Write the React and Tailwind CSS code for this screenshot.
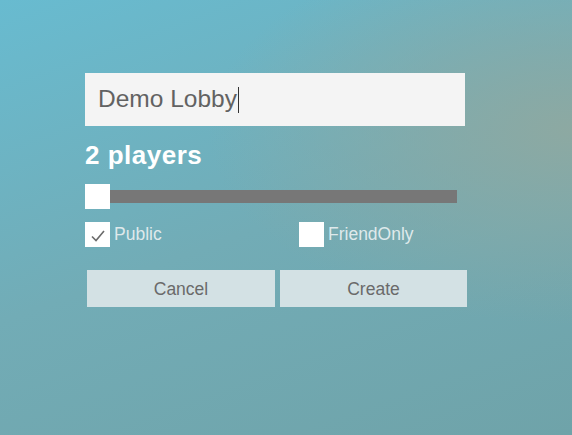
import React from 'react';

const font = { fontFamily: '"Liberation Sans", Arial, sans-serif' };

const Checkbox = ({ label, checked }) => (
  <div className="flex items-center gap-[4px]">
    <div className="w-[25px] h-[25px] bg-white flex items-center justify-center">
      {checked && (
        <svg width="16" height="14" viewBox="0 0 16 14" className="mt-[3px]">
          <path d="M2 7.5 L6 11.5 L14 2" fill="none" stroke="#6a6a6a" strokeWidth="1.6" />
        </svg>
      )}
    </div>
    <span className="text-[17.5px] text-[#dfe9eb]">{label}</span>
  </div>
);

const App = () => {
  return (
    <div
      className="w-full h-[435px] overflow-hidden bg-[radial-gradient(ellipse_at_100%_30%,#8da9a2_0%,rgba(141,169,162,0)_45%),linear-gradient(160deg,#68bbd0_0%,#72acb6_50%,#6fa3a9_100%)]"
      style={font}
    >
      <div className="pl-[85px] pt-[73px] w-[467px]">
        {/* Lobby name */}
        <div className="w-[380px] h-[53px] bg-[#f4f4f4] flex items-center pl-[13px]">
          <span className="text-[24.5px] text-[#626262] leading-none">Demo Lobby</span>
          <span className="w-[1.5px] h-[26px] bg-[#333] ml-[1px]"></span>
        </div>

        {/* Player count */}
        <div className="mt-[14px] text-[26px] font-bold text-white leading-[30px] tracking-[0.5px]">2 players</div>

        {/* Slider */}
        <div className="mt-[14px] flex items-center w-[372px]">
          <div className="w-[25px] h-[25px] bg-white"></div>
          <div className="flex-1 h-[13px] bg-[#777777]"></div>
        </div>

        {/* Options */}
        <div className="mt-[12px] flex">
          <div className="w-[214px]">
            <Checkbox label="Public" checked />
          </div>
          <Checkbox label="FriendOnly" />
        </div>

        {/* Actions */}
        <div className="mt-[23px] ml-[2px] flex gap-[5px]">
          <button className="w-[188px] h-[37px] bg-[#d3e1e4] text-[17.5px] text-[#6a6a6a]">Cancel</button>
          <button className="w-[187px] h-[37px] bg-[#d3e1e4] text-[17.5px] text-[#6a6a6a]">Create</button>
        </div>
      </div>
    </div>
  );
};

export default App;
